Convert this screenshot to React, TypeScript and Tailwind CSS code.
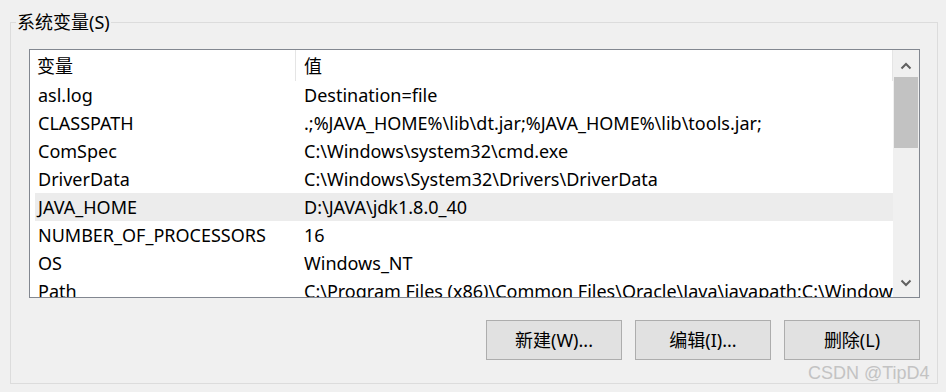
const font = { fontFamily: '"Noto Sans", "Noto Sans CJK SC", sans-serif' };

const rows: [string, string][] = [
  ['asl.log', 'Destination=file'],
  ['CLASSPATH', '.;%JAVA_HOME%\\lib\\dt.jar;%JAVA_HOME%\\lib\\tools.jar;'],
  ['ComSpec', 'C:\\Windows\\system32\\cmd.exe'],
  ['DriverData', 'C:\\Windows\\System32\\Drivers\\DriverData'],
  ['JAVA_HOME', 'D:\\JAVA\\jdk1.8.0_40'],
  ['NUMBER_OF_PROCESSORS', '16'],
  ['OS', 'Windows_NT'],
  ['Path', 'C:\\Program Files (x86)\\Common Files\\Oracle\\Java\\javapath;C:\\Windows\\system32;C:\\Windows'],
];

function Chevron({ up }: { up?: boolean }) {
  return (
    <svg width="12" height="8" viewBox="0 0 12 8" className="text-[#606060]">
      <path
        d={up ? 'M1.5 6.5 L6 2 L10.5 6.5' : 'M1.5 1.5 L6 6 L10.5 1.5'}
        fill="none"
        stroke="currentColor"
        strokeWidth="2"
      />
    </svg>
  );
}

export default function App() {
  return (
    <div className="relative w-[946px] h-[392px] overflow-hidden bg-[#f0f0f0] text-black pt-[10px] px-[10px]" style={font}>
      <fieldset className="h-[374px] w-[928px] border border-[#dcdcdc] p-0">
        <legend className="ml-[5px] px-px text-[18px] leading-[24px]">系统变量(S)</legend>

        <div className="pl-[18px]">
          {/* List view */}
          <div className="mt-[15px] h-[249px] w-[891px] border border-[#828790] bg-white flex">
            <div className="flex-1 min-w-0 overflow-hidden text-[18px]">
              <div className="flex h-[31px] items-center">
                <div className="w-[266px] h-full pl-[7px] pt-[2px] flex items-center border-r border-[#e5e5e5] shrink-0">变量</div>
                <div className="flex-1 h-full pl-[8px] pt-[2px] flex items-center border-r border-[#e5e5e5]">值</div>
              </div>
              {rows.map(([k, v]) => (
                <div
                  key={k}
                  className={
                    'flex h-[28px] leading-[28px] ml-[5px] whitespace-nowrap ' +
                    (k === 'JAVA_HOME' ? 'bg-[#ececec]' : '')
                  }
                >
                  <div className="w-[261px] pl-[3px] shrink-0">{k}</div>
                  <div className="pl-[8px]">{v}</div>
                </div>
              ))}
            </div>

            {/* Scrollbar */}
            <div className="w-[26px] shrink-0 bg-[#f0f0f0] flex flex-col items-center pt-[12px] pb-[10px]">
              <Chevron up />
              <div className="mt-[7px] h-[71px] w-[24px] bg-[#c2c2c2]" />
              <div className="flex-1" />
              <Chevron />
            </div>
          </div>

          {/* Buttons */}
          <div className="mt-[22px] flex justify-end gap-[13px] w-[891px]">
            {['新建(W)...', '编辑(I)...', '删除(L)'].map((b) => (
              <button
                key={b}
                className="h-[40px] w-[136px] border border-[#adadad] bg-[#e1e1e1] text-[18px]"
              >
                {b}
              </button>
            ))}
          </div>
        </div>
      </fieldset>

      <div
        className="absolute left-[808px] top-[360px] text-[18px] text-[#c3c3c3]"
        style={{ fontFamily: '"Liberation Sans", Arial, sans-serif' }}
      >
        CSDN @TipD4
      </div>
    </div>
  );
}
